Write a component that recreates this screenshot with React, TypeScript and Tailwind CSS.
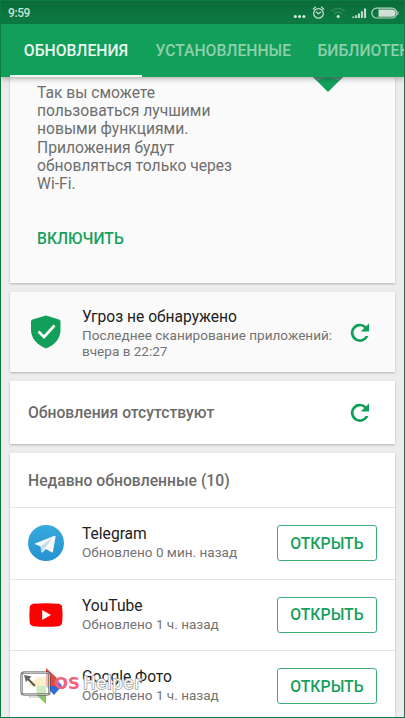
type AppEntry = {
  name: string;
  updated: string;
  icon: 'telegram' | 'youtube' | 'photos';
};

const tabs = ['ОБНОВЛЕНИЯ', 'УСТАНОВЛЕННЫЕ', 'БИБЛИОТЕКА'];

const apps: AppEntry[] = [
  { name: 'Telegram', updated: 'Обновлено 0 мин. назад', icon: 'telegram' },
  { name: 'YouTube', updated: 'Обновлено 1 ч. назад', icon: 'youtube' },
  { name: 'Google Фото', updated: 'Обновлено 1 ч. назад', icon: 'photos' },
];

function StatusBar() {
  return (
    <div className="flex h-[23px] shrink-0 items-center justify-between bg-linear-to-b from-[#0b6b3b] to-[#0d7c44] pr-[5px] pl-[7px]">
      <span className="text-[12px] leading-none font-medium tracking-[-0.4px] text-[#c5e2d2]">9:59</span>
      <svg width="106" height="14" viewBox="0 0 106 14" fill="none">
        {/* more */}
        <g fill="#dcece3">
          <circle cx="2.3" cy="10.4" r="1.5" />
          <circle cx="6.6" cy="10.4" r="1.5" />
          <circle cx="10.9" cy="10.4" r="1.5" />
        </g>
        {/* alarm */}
        <g stroke="#c8e2d4" strokeWidth="1.2" strokeLinecap="round">
          <circle cx="25.5" cy="7.4" r="4.8" />
          <path d="M20.3 3 22.5 1.2M30.7 3 28.5 1.2M23.3 6l2.2 1.8 2.2-1.6" />
        </g>
        {/* wifi */}
        <g stroke="#2a8956" strokeWidth="1.6">
          <path d="M38.5 5.2a9.8 9.8 0 0 1 13.4 0" />
          <path d="M40.9 7.9a6.2 6.2 0 0 1 8.6 0" />
        </g>
        <circle cx="45.2" cy="10.6" r="1.5" fill="#dcece3" />
        {/* signal */}
        <path d="M59.4 10.6h2V12h-2zM62.2 9.2h2V12h-2zM65 7.4h2V12h-2zM67.9 5.2h2V12h-2zM70.9 2.6h2.2V12h-2.2z" fill="#c2dccf" />
        {/* battery */}
        <rect x="78.8" y="2.2" width="25" height="9.8" rx="4.9" stroke="#b7d6c5" strokeWidth="1.2" />
        <path d="M85.5 3.5H99a3.6 3.6 0 0 1 0 7.2H85.5z" fill="#cfe0d7" />
        <path d="M105 5.4v3.4" stroke="#b7d6c5" />
      </svg>
    </div>
  );
}

function TabBar() {
  return (
    <nav className="relative z-10 flex h-[53px] shrink-0 bg-[#129f59] pl-[9px] text-[15.7px] font-medium whitespace-nowrap text-[#8ecfae] shadow-[0_2px_5px_rgba(0,0,0,0.28)]">
      {tabs.map((tab, i) => (
        <button
          key={tab}
          className={
            i === 0
              ? 'w-[132px] shrink-0 border-b-[2px] border-[#f0f8f4] pt-[2px] text-[#eaf6f0]'
              : 'shrink-0 pr-[13px] pl-[13.5px]'
          }
        >
          {tab}
        </button>
      ))}
    </nav>
  );
}

function RefreshButton() {
  return (
    <button aria-label="Обновить">
      <svg className="size-[27px]" viewBox="0 0 24 24">
        <path d="M18 6.400A8.100 8.100 0 1 0 20 15h-2.600A5.700 5.700 0 1 1 16.200 8l-3.100 3.100h7.400V3.800z" fill="#129f59" />
      </svg>
    </button>
  );
}

function AppIcon({ icon }: { icon: AppEntry['icon'] }) {
  if (icon === 'telegram') {
    return (
      <svg className="size-9" viewBox="0 0 36 36">
        <defs>
          <linearGradient id="sky" x1="0" y1="0" x2="0" y2="1">
            <stop offset="0" stopColor="#37a9dd" />
            <stop offset="1" stopColor="#2593cf" />
          </linearGradient>
        </defs>
        <circle cx="18" cy="18" r="18" fill="url(#sky)" />
        <path d="M7 18.6 26.6 10.7c.7-.2 1.1.2 1 .9L25 26.6c-.2.9-.8 1.1-1.5.6l-5.6-3.1-3.2 3.2c-.6.4-1.2.2-1.3-.6l-.8-5.200-5.400-2.200c-.5-.2-.6-.5-.2-.7z" fill="#f4f8fb" />
        <path d="m12.6 21.500 12.200-8.900-8.200 10.400-2.400 4.400c-.4 0-.7-.3-.8-.8z" fill="#c5d9e6" />
      </svg>
    );
  }
  if (icon === 'youtube') {
    return (
      <svg className="size-9" viewBox="0 0 36 36">
        <path d="M5.5 6.8Q18 5.8 30.5 6.8 34 7.2 34.2 10.500q.7 7.300 0 14.800-.3 3.500-3.700 3.900-12.500 1-25 0Q2 28.800 1.700 25.300q-.7-7.500 0-14.800Q2 7.200 5.500 6.800z" fill="#f00" />
        <path d="M14.2 13v10l8.800-5z" fill="#fff" />
      </svg>
    );
  }
  return (
    <svg className="size-9" viewBox="0 0 36 36">
      <path d="M0 18 9 9h9v9z" fill="#fbd980" />
      <path d="M18 18V9.500h9.500L34 18l-8 9z" fill="#2f6ae0" />
      <path d="M18 0v18h10.500V9.500z" fill="#df4c3f" />
      <path d="M18 18v18L8.500 27V18z" fill="#86c95b" />
    </svg>
  );
}

function Watermark() {
  return (
    <div className="absolute top-[669px] left-[19px] z-20 flex h-[28px] items-center font-['DejaVu_Sans',sans-serif]">
      <svg width="31" height="28" viewBox="0 0 31 28" fill="none">
        <rect x="1.500" y="2.500" width="28" height="22" rx="2.500" fill="#fff" fillOpacity=".6" stroke="#444" strokeWidth="2" />
        <rect x="1.500" y="2.500" width="28" height="22" rx="2.500" stroke="#ddd" strokeWidth=".8" />
        <path d="M9.500 25.500v1.500h13v-1.500" stroke="#aaa" strokeWidth=".8" />
        <path d="m7 8 8 8" stroke="#5e5440" strokeWidth="2" />
        <path d="m4 5 7.500 1.500L6 12z" fill="#666" />
      </svg>
      <span className="ml-[3px] text-[16.500px] font-bold text-[#f2607a]">OS</span>
      <span className="ml-[3px] text-[17px] tracking-[0.4px] text-white [-webkit-text-stroke:1.6px_#a0a0a0] [paint-order:stroke_fill]">Helper</span>
    </div>
  );
}

export default function App() {
  return (
    <div className="relative flex h-[718px] w-[405px] flex-col overflow-hidden border border-[#0b7b44] bg-[#ececec] font-[Roboto,sans-serif]">
      <StatusBar />
      <TabBar />

      <main className="flex flex-col gap-[9px] px-[9px]">
        {/* Auto-update promo */}
        <section className="relative h-[206px] bg-[#fafafa] pt-[7px] pl-[27px] shadow-[0_1px_2px_rgba(0,0,0,0.25)]">
          <p className="text-[15.65px] leading-[18.2px] text-[#6e6e6e]">
            Так вы сможете<br />
            пользоваться лучшими<br />
            новыми функциями.<br />
            Приложения будут<br />
            обновляться только через<br />
            Wi-Fi.
          </p>
          <button className="mt-[36px] text-[15.7px] leading-[20px] font-medium text-[#17a05d]">ВКЛЮЧИТЬ</button>
          <svg className="absolute top-0 right-[52px]" width="30" height="16" viewBox="0 0 30 16">
            <path d="M0 0h30L15 15z" fill="#129f59" />
            <path d="M0 0h30l-4 4Q15-2 4 4z" fill="#4a9a72" />
          </svg>
        </section>

        {/* Play Protect */}
        <section className="flex h-[80px] items-center bg-[#fafafa] pr-[22px] pl-[20px] shadow-[0_1px_2px_rgba(0,0,0,0.25)]">
          <svg width="32" height="34" viewBox="0 0 32 34">
            <path d="M16 .5 29 4.5q1.5.6 1.5 2.2V15c0 8-5.5 15-14.5 18.5C7 30 1 23 1 15V6.700q0-1.600 1.500-2.200z" fill="#129f59" />
            <path d="m8.500 16.500 5.500 5.500L24.500 10.500" fill="none" stroke="#fff" strokeWidth="2.6" />
          </svg>
          <div className="ml-[20px] flex-1 pt-[2px] whitespace-nowrap">
            <h2 className="text-[15.6px] leading-[20px] text-[#212121]">Угроз не обнаружено</h2>
            <p className="text-[13.55px] leading-[16px] text-[#737373]">Последнее сканирование приложений:<br />вчера в 22:27</p>
          </div>
          <RefreshButton />
        </section>

        {/* Pending updates */}
        <section className="flex h-[63px] items-center justify-between bg-white pr-[22px] pl-[18px] shadow-[0_1px_2px_rgba(0,0,0,0.25)]">
          <h2 className="text-[15.7px] font-medium text-[#6b6b6b]">Обновления отсутствуют</h2>
          <RefreshButton />
        </section>

        {/* Recently updated */}
        <section className="bg-white shadow-[0_1px_2px_rgba(0,0,0,0.25)]">
          <h2 className="flex h-[54px] items-center pt-[1px] pl-[18px] text-[15.7px] font-medium text-[#6b6b6b]">Недавно обновленные (10)</h2>
          {apps.map((app) => (
            <div key={app.name} className="flex h-[71.5px] items-center border-t border-[#e4e4e4] pr-[18px] pl-[18px]">
              <AppIcon icon={app.icon} />
              <div className="ml-[18px] flex-1 whitespace-nowrap">
                <h3 className="text-[15.6px] leading-[19px] text-[#212121]">{app.name}</h3>
                <p className="text-[13.55px] leading-[17px] text-[#737373]">{app.updated}</p>
              </div>
              <button className="h-[36px] w-[100px] rounded-[3px] border border-[#3fae78] pt-[1px] text-[15.8px] font-medium text-[#17a05d]">ОТКРЫТЬ</button>
            </div>
          ))}
        </section>
      </main>

      <Watermark />
    </div>
  );
}
